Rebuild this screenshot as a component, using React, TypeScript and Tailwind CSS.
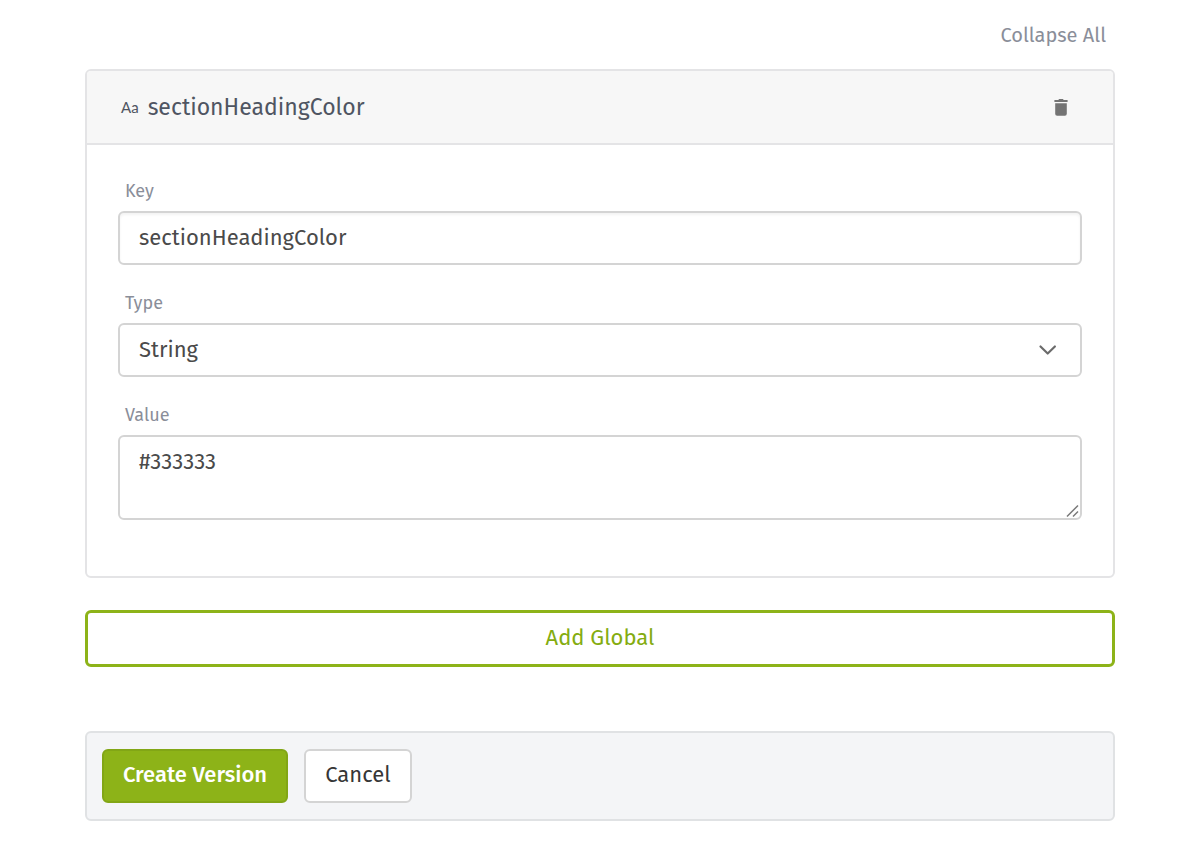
import { useState } from "react";

const inputStyle =
  "block w-full rounded-md border-2 border-[#d4d4d4] bg-white px-[19px] text-[22px] leading-7 text-[#4a4a4a] outline-none";

const Label = ({ id, text }: any) => (
  <label
    htmlFor={id}
    className="mb-2 block pl-[7px] text-[18px] leading-6 text-[#8a8e99]"
  >
    {text}
  </label>
);

const GlobalItem = ({ item, open, onChange }: any) => {
  return (
    <div className="overflow-hidden rounded-md border-2 border-[#e4e4e6]">
      <div className="flex h-[74px] items-center justify-between border-b-2 border-[#e4e4e6] bg-[#f7f7f7] pr-11 pl-[34px]">
        <div className="flex items-center gap-[9px]">
          <span className="font-['Lato',sans-serif] text-[15px] leading-6 text-[#4f5562]">
            Aa
          </span>
          <span className="text-[23px] leading-7 text-[#4f5562]">
            {item.key}
          </span>
        </div>
        <button aria-label="Delete">
          <svg width="16" height="18" viewBox="0 0 16 18" fill="#747474">
            <path d="M2.2 5.2h11.6v10.6a1.9 1.9 0 0 1-1.9 1.9H4.1a1.9 1.9 0 0 1-1.9-1.9z" />
            <path d="M1.4 2h3.8l1-1h3.6l1 1h3.8v2H1.4z" />
          </svg>
        </button>
      </div>

      {open && (
        <div className="flex flex-col gap-[26px] px-[31px] pt-[34px] pb-14">
          <div>
            <Label id="key" text="Key" />
            <input
              id="key"
              value={item.key}
              onChange={(e) => onChange({ ...item, key: e.target.value })}
              className={`${inputStyle} h-[54px] pb-[2px] shadow-[inset_0_2px_3px_#0000000d]`}
            />
          </div>
          <div>
            <Label id="type" text="Type" />
            <div className="relative">
              <select
                id="type"
                value={item.type}
                onChange={(e) => onChange({ ...item, type: e.target.value })}
                className={`${inputStyle} h-[54px] appearance-none`}
              >
                <option>String</option>
                <option>Number</option>
                <option>Boolean</option>
              </select>
              <svg
                className="pointer-events-none absolute inset-y-0 right-6 my-auto"
                width="20"
                height="20"
                viewBox="0 0 20 20"
                fill="none"
                stroke="#6b6b6b"
                strokeWidth="2.2"
                strokeLinecap="round"
                strokeLinejoin="round"
              >
                <path d="M2.5 6.5l7.2 7 7.2-7" />
              </svg>
            </div>
          </div>
          <div>
            <Label id="value" text="Value" />
            <div className="relative">
              <textarea
                id="value"
                value={item.value}
                onChange={(e) => onChange({ ...item, value: e.target.value })}
                className={`${inputStyle} h-[85px] resize-y py-[11px] [&::-webkit-resizer]:bg-transparent`}
              />
              <svg
                className="pointer-events-none absolute right-[2px] bottom-[2px]"
                width="14"
                height="14"
                viewBox="0 0 14 14"
                fill="none"
                stroke="#7a7a7a"
                strokeWidth="1.5"
              >
                <path d="M1 12.5L12 1.5M7 12.5l5-5" />
              </svg>
            </div>
          </div>
        </div>
      )}
    </div>
  );
};

const App = () => {
  const [open, setOpen] = useState(true);
  const [item, setItem] = useState({
    key: "sectionHeadingColor",
    type: "String",
    value: "#333333",
  });

  return (
    <div className="min-h-screen bg-white px-[85px] pb-10 font-['Fira_Sans','Noto_Sans',sans-serif]">
      <div className="flex h-[69px] items-center justify-end pr-[9px]">
        <button
          onClick={() => setOpen(!open)}
          className="text-[20px] leading-6 text-[#8a8e99]"
        >
          Collapse All
        </button>
      </div>

      <GlobalItem item={item} open={open} onChange={setItem} />

      <button className="mt-8 h-[57px] w-full rounded-md border-3 border-[#8db318] pb-[2px] text-[22px] leading-7 text-[#84ac10]">
        Add Global
      </button>

      <div className="mt-16 flex gap-4 rounded-md border-2 border-[#e0e2e4] bg-[#f4f5f7] px-[15px] py-4">
        <button className="h-[54px] w-[186px] rounded-md border-2 border-[#82a616] bg-[#8db318] pb-[2px] text-[22px] leading-7 font-medium text-white">
          Create Version
        </button>
        <button className="h-[54px] w-[108px] rounded-md border-2 border-[#d4d4d4] bg-white pb-[2px] text-[22px] leading-7 text-[#363636]">
          Cancel
        </button>
      </div>
    </div>
  );
};

export default App;
